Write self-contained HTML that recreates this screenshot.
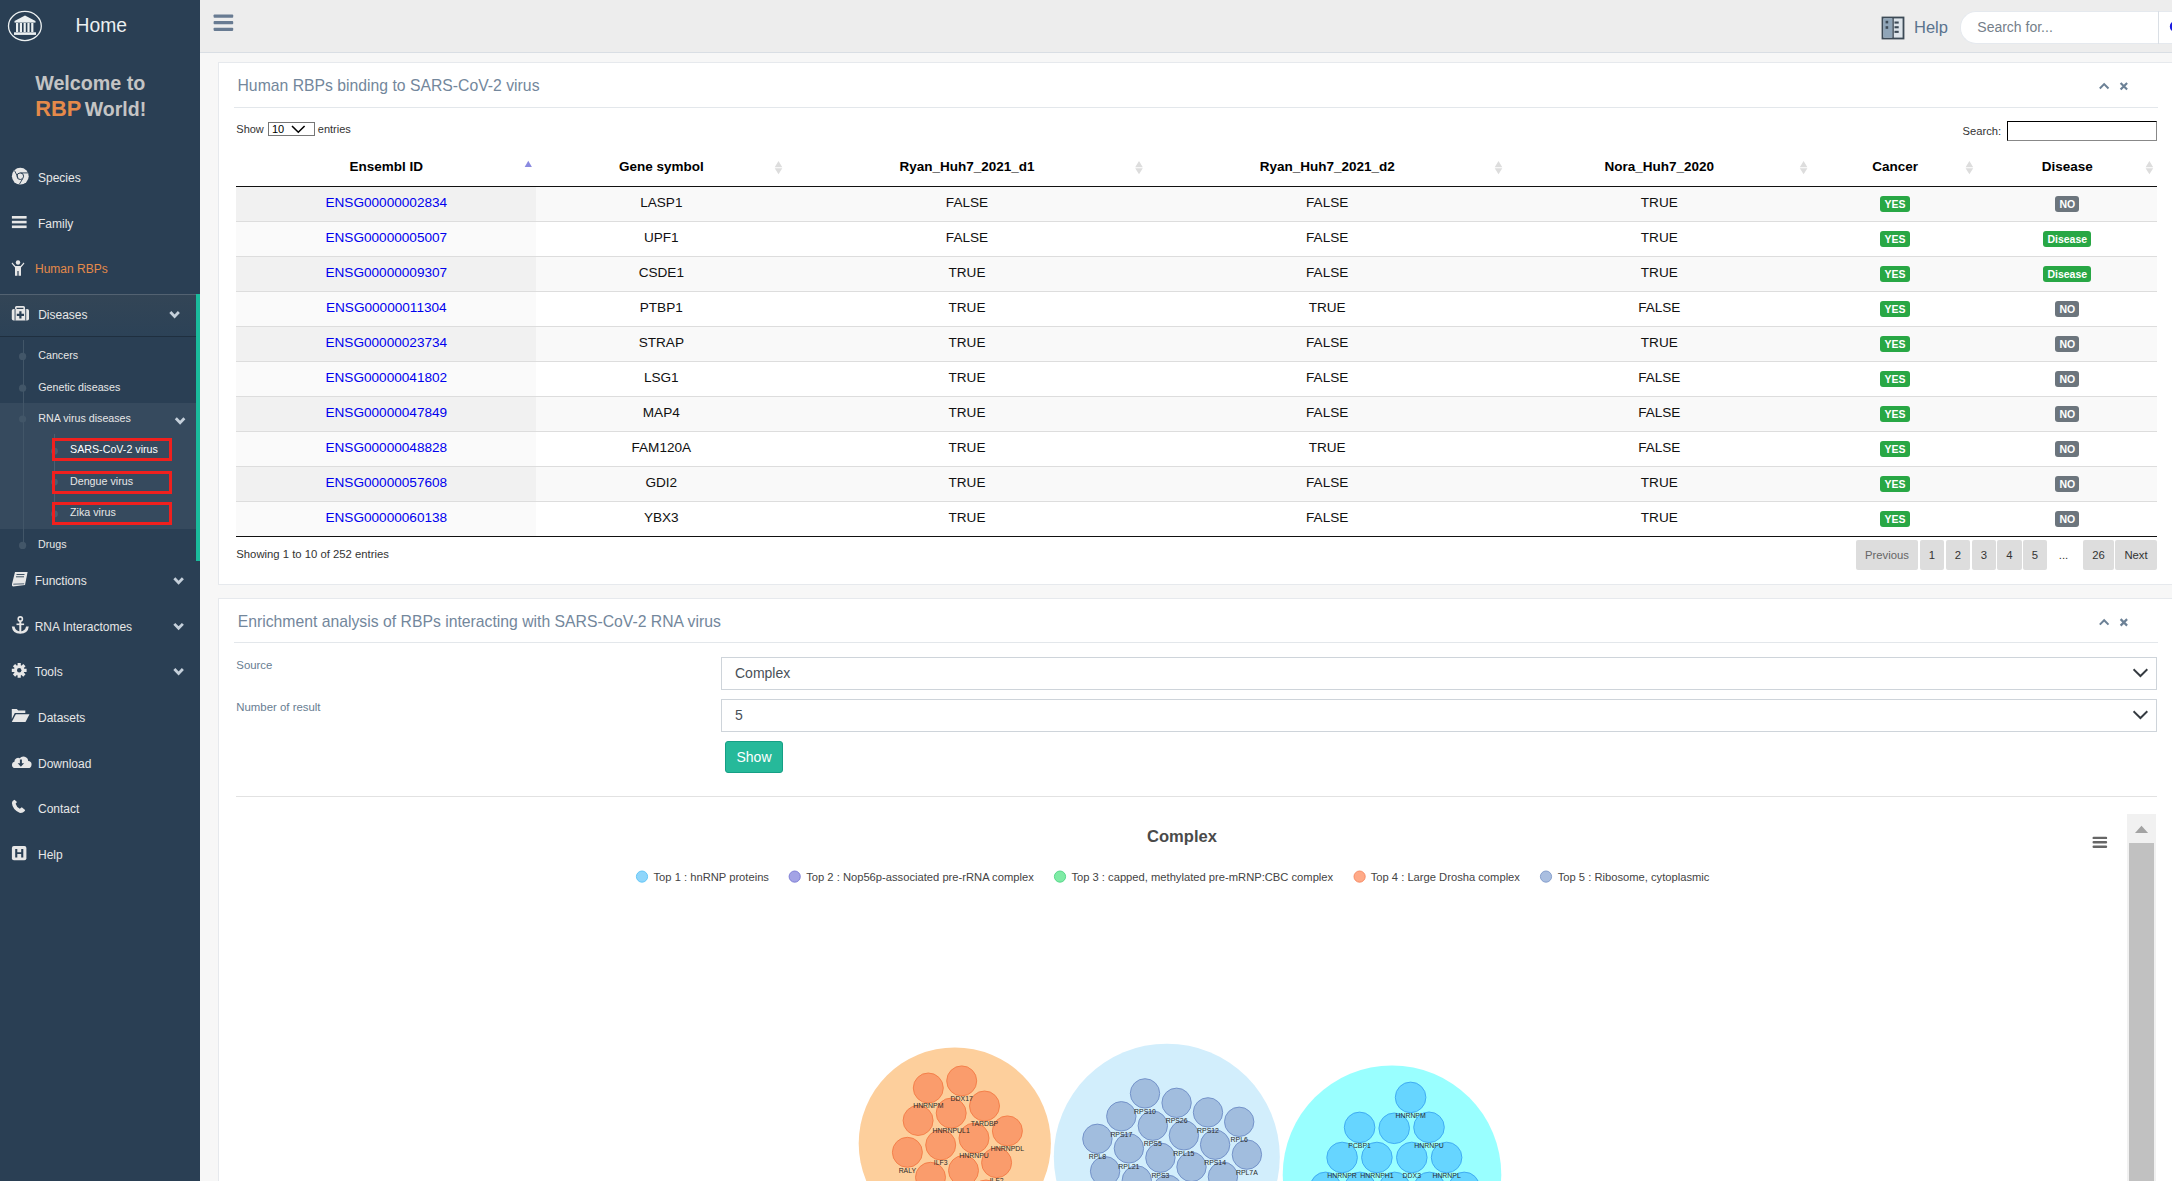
<!DOCTYPE html><html><head><meta charset="utf-8"><style>
*{margin:0;padding:0;box-sizing:border-box}
html,body{width:2172px;height:1181px;overflow:hidden;background:#F7F7F7;font-family:"Liberation Sans",sans-serif}
.t{position:absolute;line-height:1;white-space:nowrap}
.r{position:absolute}
svg{position:absolute;overflow:visible}
</style></head><body><div class="r" style="left:200px;top:0px;width:1972px;height:52px;background:#EDEDED"></div>
<div class="r" style="left:200px;top:52px;width:1972px;height:1px;background:#D9DEE4"></div>
<div class="r" style="left:218px;top:62px;width:1990px;height:523px;background:#fff;border:1px solid #E6E9ED"></div>
<div class="r" style="left:218px;top:598px;width:1990px;height:600px;background:#fff;border:1px solid #E6E9ED"></div>
<div class="r" style="left:0px;top:0px;width:200px;height:1181px;background:#2A3F54"></div>
<svg style="left:0;top:0" width="60" height="60"><ellipse cx="24.9" cy="26" rx="16.4" ry="14.6" fill="none" stroke="#ECF0F1" stroke-width="1.3"/><g fill="#ECF0F1"><path d="M14.5 21 L25 15.5 L35.5 21 Z"/><rect x="14.5" y="21" width="21" height="1.6"/><rect x="16" y="23" width="2.2" height="9"/><rect x="19.8" y="23" width="2.2" height="9"/><rect x="23.6" y="23" width="2.2" height="9"/><rect x="27.4" y="23" width="2.2" height="9"/><rect x="31.2" y="23" width="2.2" height="9"/><rect x="14" y="32.3" width="22" height="2.6"/></g></svg>
<div class="t " style="left:75.50px;top:15.86px;font-size:19.3px;color:#ECF0F1">Home</div>
<div class="t " style="left:35.20px;top:74.32px;font-size:19.7px;color:#C4C4C4;font-weight:bold">Welcome to</div>
<div class="t " style="left:35.20px;top:98.24px;font-size:21.8px;color:#E58A4A;font-weight:bold">RBP</div>
<div class="t " style="left:84.80px;top:100.19px;font-size:19.5px;color:#C4C4C4;font-weight:bold">World!</div>
<div class="r" style="left:0px;top:294px;width:196px;height:42px;background:linear-gradient(#334556,#2C4257);box-shadow:rgba(0,0,0,.25) 0 1px 0, inset rgba(255,255,255,.16) 0 1px 0"></div>
<div class="r" style="left:196px;top:294px;width:4px;height:267px;background:#1ABB9C"></div>
<div class="r" style="left:0px;top:403px;width:196px;height:126px;background:rgba(255,255,255,.06)"></div>
<div class="r" style="left:23px;top:340px;width:1px;height:206px;background:#425668"></div>
<svg style="left:0;top:0" width="40" height="600"><circle cx="22.6" cy="356.4" r="3.6" fill="#425668"/></svg>
<svg style="left:0;top:0" width="40" height="600"><circle cx="22.6" cy="388.2" r="3.6" fill="#425668"/></svg>
<svg style="left:0;top:0" width="40" height="600"><circle cx="22.6" cy="419" r="3.6" fill="#425668"/></svg>
<svg style="left:0;top:0" width="40" height="600"><circle cx="22.6" cy="545.4" r="3.6" fill="#425668"/></svg>
<div class="r" style="left:54px;top:434px;width:1px;height:91px;background:#4A5E70"></div>
<div class="t " style="left:38.00px;top:172.04px;font-size:12px;color:#E7E7E7">Species</div>
<div class="t " style="left:38.00px;top:217.74px;font-size:12px;color:#E7E7E7">Family</div>
<div class="t " style="left:35.00px;top:262.94px;font-size:12px;color:#E58A4A">Human RBPs</div>
<div class="t " style="left:38.15px;top:308.84px;font-size:12px;color:#E7E7E7">Diseases</div>
<div class="t " style="left:34.70px;top:575.04px;font-size:12px;color:#E7E7E7">Functions</div>
<div class="t " style="left:34.70px;top:620.84px;font-size:12px;color:#E7E7E7">RNA Interactomes</div>
<div class="t " style="left:34.70px;top:665.74px;font-size:12px;color:#E7E7E7">Tools</div>
<div class="t " style="left:38.00px;top:711.94px;font-size:12px;color:#E7E7E7">Datasets</div>
<div class="t " style="left:38.00px;top:757.64px;font-size:12px;color:#E7E7E7">Download</div>
<div class="t " style="left:38.00px;top:802.64px;font-size:12px;color:#E7E7E7">Contact</div>
<div class="t " style="left:38.00px;top:849.04px;font-size:12px;color:#E7E7E7">Help</div>
<div class="t " style="left:38.25px;top:349.94px;font-size:10.7px;color:#E7E7E7">Cancers</div>
<div class="t " style="left:38.25px;top:381.64px;font-size:10.7px;color:#E7E7E7">Genetic diseases</div>
<div class="t " style="left:38.25px;top:413.14px;font-size:10.7px;color:#E7E7E7">RNA virus diseases</div>
<div class="t " style="left:38.10px;top:539.14px;font-size:10.7px;color:#E7E7E7">Drugs</div>
<div class="t " style="left:70.00px;top:444.24px;font-size:10.7px;color:#FFFFFF">SARS-CoV-2 virus</div>
<div class="t " style="left:70.00px;top:476.14px;font-size:10.7px;color:#E7E7E7">Dengue virus</div>
<div class="t " style="left:70.00px;top:506.84px;font-size:10.7px;color:#E7E7E7">Zika virus</div>
<svg style="left:0;top:0" width="80" height="600"><circle cx="54.5" cy="451.2" r="3.4" fill="#4A5E70"/></svg>
<svg style="left:0;top:0" width="80" height="600"><circle cx="54.5" cy="482.1" r="3.4" fill="#4A5E70"/></svg>
<svg style="left:0;top:0" width="80" height="600"><circle cx="54.5" cy="513.9" r="3.4" fill="#4A5E70"/></svg>
<div class="r" style="left:52px;top:438px;width:120px;height:23px;border:3px solid #F0201E"></div>
<div class="r" style="left:52px;top:471px;width:120px;height:23px;border:3px solid #F0201E"></div>
<div class="r" style="left:52px;top:502px;width:120px;height:23px;border:3px solid #F0201E"></div>
<svg style="left:0;top:0" width="200" height="1181"><path d="M171.3 313.0 L174.6 316.4 L177.9 313.0" fill="none" stroke="#C5D0DB" stroke-width="2.8" stroke-linecap="square"/></svg>
<svg style="left:0;top:0" width="200" height="1181"><path d="M176.8 419.3 L180.1 422.7 L183.4 419.3" fill="none" stroke="#C5D0DB" stroke-width="2.8" stroke-linecap="square"/></svg>
<svg style="left:0;top:0" width="200" height="1181"><path d="M175.3 579.3 L178.6 582.7 L181.9 579.3" fill="none" stroke="#C5D0DB" stroke-width="2.8" stroke-linecap="square"/></svg>
<svg style="left:0;top:0" width="200" height="1181"><path d="M175.3 624.9 L178.6 628.3000000000001 L181.9 624.9" fill="none" stroke="#C5D0DB" stroke-width="2.8" stroke-linecap="square"/></svg>
<svg style="left:0;top:0" width="200" height="1181"><path d="M175.3 670.0 L178.6 673.4000000000001 L181.9 670.0" fill="none" stroke="#C5D0DB" stroke-width="2.8" stroke-linecap="square"/></svg>
<svg style="left:0;top:0" width="200" height="1181"><g fill="#E7E7E7"><circle cx="20.3" cy="176.2" r="8.4" fill="#E7E7E7"/><circle cx="20.3" cy="176.2" r="3.3" fill="none" stroke="#2A3F54" stroke-width="1"/><path d="M14.5 170.5 L18 177.5 M20.5 172.9 L28 172.9 M22.5 179 L19.5 184" stroke="#2A3F54" stroke-width="0.9" fill="none"/><rect x="11.9" y="216" width="14.7" height="2.6"/><rect x="11.9" y="220.8" width="14.7" height="2.6"/><rect x="11.9" y="225.5" width="14.7" height="2.6"/><circle cx="18" cy="262.5" r="2.2"/><path d="M12.2 262.5 L15.5 266 L20.5 266 L23.7 262.5 L24.4 263.5 L21 267.5 L21 275.7 L18.6 275.7 L18.6 271 L17.4 271 L17.4 275.7 L15 275.7 L15 267.5 L11.6 263.5 Z"/><path d="M16.5 306 h7 a1.5 1.5 0 0 1 1.5 1.5 v1.4 h-1.6 v-1.2 h-6.8 v1.2 h-1.6 v-1.4 a1.5 1.5 0 0 1 1.5 -1.5z"/><rect x="11.8" y="308.9" width="17.2" height="11.7" rx="1.8"/><rect x="14.6" y="308.9" width="0.9" height="11.7" fill="#2A3F54"/><rect x="25.3" y="308.9" width="0.9" height="11.7" fill="#2A3F54"/><path d="M19.3 311.3 h2.2 v2.5 h2.5 v2.2 h-2.5 v2.5 h-2.2 v-2.5 h-2.5 v-2.2 h2.5z" fill="#2A3F54"/><path d="M15 572 L27.6 572 L25 585 L13 586.6 Q11.5 586 12 584 Z"/><path d="M16.5 574.5 L24.5 574.5 M16 576.8 L24 576.8" stroke="#2A3F54" stroke-width="0.9"/><path d="M13.3 584.2 L24.2 583.8" stroke="#2A3F54" stroke-width="0.8"/><circle cx="20.3" cy="619" r="2.1" fill="none" stroke="#E7E7E7" stroke-width="1.6"/><rect x="19.3" y="621" width="2" height="11.5"/><rect x="16.5" y="623.5" width="7.6" height="1.6"/><path d="M11.8 626.5 L14.5 626.5 Q15.5 631 20.3 631.5 Q25.1 631 26.1 626.5 L28.8 626.5 Q28 633.7 20.3 633.7 Q12.6 633.7 11.8 626.5 Z"/><circle cx="19.2" cy="670.3" r="5.2"/><g stroke="#E7E7E7" stroke-width="3.2"><path d="M19.2 662.9 V677.7 M11.8 670.3 H26.6 M14 665.1 L24.4 675.5 M24.4 665.1 L14 675.5"/></g><circle cx="19.2" cy="670.3" r="2.2" fill="#2A3F54"/><path d="M11.8 709 h5 l1.5 1.6 h7 v2.4 h-10.5 l-3 6 Z"/><path d="M15.8 714.2 h13.7 l-4 7.8 h-13.7 Z"/><path d="M15 768.1 a3.2 3.2 0 0 1 -0.6 -6.3 a3.8 3.8 0 0 1 5.3 -3.6 a4.8 4.8 0 0 1 8.5 2.7 a3.6 3.6 0 0 1 -0.5 7.2 Z"/><path d="M19.9 759.5 h2 v3.8 h2.2 l-3.2 3.4 l-3.2 -3.4 h2.2 Z" fill="#2A3F54"/><path d="M14.5 799.8 Q12 800.5 11.9 803 Q12.5 809.5 19.5 812.8 Q22.5 813.5 24.8 811 L25.1 810 L21.8 807.3 L19.8 808.8 Q16.5 807 15.6 803.8 L17 802 Z"/><rect x="11.9" y="846" width="14.5" height="14.3" rx="2"/><path d="M15.2 849 v8.5 h2.1 v-3.4 h3.9 v3.4 h2.1 v-8.5 h-2.1 v3.3 h-3.9 v-3.3 Z" fill="#2A3F54"/></g></svg>
<svg style="left:0;top:0" width="2172" height="60"><g fill="#687B92"><rect x="213.6" y="14.5" width="19.6" height="3.2" rx="0.8"/><rect x="213.6" y="21.1" width="19.6" height="3.2" rx="0.8"/><rect x="213.6" y="27.7" width="19.6" height="3.2" rx="0.8"/></g><rect x="1882.5" y="17.5" width="21" height="21" fill="#DDE4EA" stroke="#3C4A56" stroke-width="1.8"/><rect x="1883.4" y="18.4" width="9" height="19.2" fill="#8FA5B8"/><rect x="1892.4" y="18" width="1.4" height="20" fill="#3C4A56"/><g fill="#3C4A56"><rect x="1885.6" y="20.8" width="2.6" height="2.6"/><rect x="1885.6" y="26.2" width="2.6" height="2.6"/><rect x="1894.5" y="21.5" width="4.2" height="2.1"/><rect x="1894.5" y="26.2" width="4.2" height="2.1"/><rect x="1894.5" y="30.8" width="4.2" height="2.1"/></g></svg>
<div class="t " style="left:1914.00px;top:18.93px;font-size:16.5px;color:#5A738E">Help</div>
<div class="r" style="left:1960px;top:10.5px;width:210px;height:33px;background:#fff;border:1px solid #E5E9EE;border-right:none;border-radius:16px 0 0 16px"></div>
<div class="r" style="left:2158px;top:10.5px;width:1px;height:33px;background:#DADFE5"></div>
<div class="r" style="left:2159px;top:10.5px;width:13px;height:33px;background:#fff;border-top:1px solid #E5E9EE;border-bottom:1px solid #E5E9EE"></div>
<svg style="left:0;top:0" width="2172" height="60"><circle cx="2175.5" cy="26.5" r="4.6" fill="none" stroke="#1B1BE0" stroke-width="2.2"/></svg>
<div class="t " style="left:1977.30px;top:20.05px;font-size:14px;color:#75808A">Search for...</div>
<div class="t " style="left:237.50px;top:78.06px;font-size:15.76px;color:#73879C">Human RBPs binding to SARS-CoV-2 virus</div>
<div class="r" style="left:234px;top:107px;width:1924px;height:1px;background:#E3E7EB"></div>
<svg style="left:0;top:0" width="2172" height="1181"><path d="M2099.8 88.5 L2104.15 84.1 L2108.5 88.5" fill="none" stroke="#6C8196" stroke-width="2"/><path d="M2120.6 83.0 L2127.1 89.5 M2127.1 83.0 L2120.6 89.5" stroke="#6C8196" stroke-width="2.2"/></svg>
<svg style="left:0;top:0" width="2172" height="1181"><path d="M2099.8 624.6 L2104.15 620.2 L2108.5 624.6" fill="none" stroke="#6C8196" stroke-width="2"/><path d="M2120.6 619.1 L2127.1 625.6 M2127.1 619.1 L2120.6 625.6" stroke="#6C8196" stroke-width="2.2"/></svg>
<div class="t " style="left:236.30px;top:123.59px;font-size:11px;color:#333">Show</div>
<div class="r" style="left:268px;top:122px;width:47px;height:14px;border:1px solid #767676;background:#fff"></div>
<div class="t " style="left:272.00px;top:123.59px;font-size:11px;color:#000">10</div>
<svg style="left:0;top:0" width="400" height="200"><path d="M292 126 L298.3 132.2 L304.6 126" fill="none" stroke="#000" stroke-width="1.6"/></svg>
<div class="t " style="left:317.80px;top:123.59px;font-size:11px;color:#333">entries</div>
<div class="t " style="left:1962.50px;top:125.92px;font-size:11.2px;color:#333">Search:</div>
<div class="r" style="left:2007px;top:121px;width:150px;height:20px;border:2px inset #767676;border-color:#111 #888 #888 #111;border-width:1.5px;background:#fff"></div>
<div class="t " style="left:186.30px;top:159.97px;width:400px;text-align:center;font-size:13.5px;color:#000;font-weight:bold">Ensembl ID</div>
<div class="t " style="left:461.30px;top:159.97px;width:400px;text-align:center;font-size:13.5px;color:#000;font-weight:bold">Gene symbol</div>
<div class="t " style="left:767.00px;top:159.97px;width:400px;text-align:center;font-size:13.5px;color:#000;font-weight:bold">Ryan_Huh7_2021_d1</div>
<div class="t " style="left:1127.20px;top:159.97px;width:400px;text-align:center;font-size:13.5px;color:#000;font-weight:bold">Ryan_Huh7_2021_d2</div>
<div class="t " style="left:1459.30px;top:159.97px;width:400px;text-align:center;font-size:13.5px;color:#000;font-weight:bold">Nora_Huh7_2020</div>
<div class="t " style="left:1695.10px;top:159.97px;width:400px;text-align:center;font-size:13.5px;color:#000;font-weight:bold">Cancer</div>
<div class="t " style="left:1867.30px;top:159.97px;width:400px;text-align:center;font-size:13.5px;color:#000;font-weight:bold">Disease</div>
<svg style="left:0;top:0" width="2172" height="300"><path d="M524.6999999999999 167 L528.3 160.8 L531.9 167 Z" fill="#8A8AE0"/><path d="M774.7 167.3 L778.5 161.1 L782.3 167.3 Z M774.7 168.2 L778.5 174.3 L782.3 168.2 Z" fill="#DDDDDD"/><path d="M1135.2 167.3 L1139 161.1 L1142.8 167.3 Z M1135.2 168.2 L1139 174.3 L1142.8 168.2 Z" fill="#DDDDDD"/><path d="M1494.7 167.3 L1498.5 161.1 L1502.3 167.3 Z M1494.7 168.2 L1498.5 174.3 L1502.3 168.2 Z" fill="#DDDDDD"/><path d="M1799.8 167.3 L1803.6 161.1 L1807.3999999999999 167.3 Z M1799.8 168.2 L1803.6 174.3 L1807.3999999999999 168.2 Z" fill="#DDDDDD"/><path d="M1965.6000000000001 167.3 L1969.4 161.1 L1973.2 167.3 Z M1965.6000000000001 168.2 L1969.4 174.3 L1973.2 168.2 Z" fill="#DDDDDD"/><path d="M2145.6 167.3 L2149.4 161.1 L2153.2000000000003 167.3 Z M2145.6 168.2 L2149.4 174.3 L2153.2000000000003 168.2 Z" fill="#DDDDDD"/></svg>
<div class="r" style="left:236px;top:186px;width:1921px;height:1px;background:#111"></div>
<div class="r" style="left:236px;top:187px;width:1921px;height:34px;background:#F9F9F9"></div>
<div class="r" style="left:236px;top:187px;width:300px;height:34px;background:#F1F1F1"></div>
<div class="t " style="left:236.30px;top:196.28px;width:300px;text-align:center;font-size:13.6px;color:#0000EE">ENSG00000002834</div>
<div class="t " style="left:511.30px;top:196.28px;width:300px;text-align:center;font-size:13.6px;color:#111">LASP1</div>
<div class="t " style="left:817.00px;top:196.28px;width:300px;text-align:center;font-size:13.6px;color:#111">FALSE</div>
<div class="t " style="left:1177.20px;top:196.28px;width:300px;text-align:center;font-size:13.6px;color:#111">FALSE</div>
<div class="t " style="left:1509.30px;top:196.28px;width:300px;text-align:center;font-size:13.6px;color:#111">TRUE</div>
<div class="r" style="left:1835.1px;top:196px;width:120px;height:16px;text-align:center"><span style="display:inline-block;background:#28A745;color:#fff;font-weight:bold;font-size:10.5px;line-height:10.5px;padding:2.7px 4.2px;border-radius:3px;vertical-align:top">YES</span></div>
<div class="r" style="left:2007.3000000000002px;top:196px;width:120px;height:16px;text-align:center"><span style="display:inline-block;background:#6C757D;color:#fff;font-weight:bold;font-size:10.5px;line-height:10.5px;padding:2.7px 4.2px;border-radius:3px;vertical-align:top">NO</span></div>
<div class="r" style="left:236px;top:221px;width:1921px;height:1px;background:#DDDDDD"></div>
<div class="r" style="left:236px;top:222px;width:1921px;height:34px;background:#FFFFFF"></div>
<div class="r" style="left:236px;top:222px;width:300px;height:34px;background:#FAFAFA"></div>
<div class="t " style="left:236.30px;top:231.28px;width:300px;text-align:center;font-size:13.6px;color:#0000EE">ENSG00000005007</div>
<div class="t " style="left:511.30px;top:231.28px;width:300px;text-align:center;font-size:13.6px;color:#111">UPF1</div>
<div class="t " style="left:817.00px;top:231.28px;width:300px;text-align:center;font-size:13.6px;color:#111">FALSE</div>
<div class="t " style="left:1177.20px;top:231.28px;width:300px;text-align:center;font-size:13.6px;color:#111">FALSE</div>
<div class="t " style="left:1509.30px;top:231.28px;width:300px;text-align:center;font-size:13.6px;color:#111">TRUE</div>
<div class="r" style="left:1835.1px;top:231px;width:120px;height:16px;text-align:center"><span style="display:inline-block;background:#28A745;color:#fff;font-weight:bold;font-size:10.5px;line-height:10.5px;padding:2.7px 4.2px;border-radius:3px;vertical-align:top">YES</span></div>
<div class="r" style="left:2007.3000000000002px;top:231px;width:120px;height:16px;text-align:center"><span style="display:inline-block;background:#28A745;color:#fff;font-weight:bold;font-size:10.5px;line-height:10.5px;padding:2.7px 4.2px;border-radius:3px;vertical-align:top">Disease</span></div>
<div class="r" style="left:236px;top:256px;width:1921px;height:1px;background:#DDDDDD"></div>
<div class="r" style="left:236px;top:257px;width:1921px;height:34px;background:#F9F9F9"></div>
<div class="r" style="left:236px;top:257px;width:300px;height:34px;background:#F1F1F1"></div>
<div class="t " style="left:236.30px;top:266.28px;width:300px;text-align:center;font-size:13.6px;color:#0000EE">ENSG00000009307</div>
<div class="t " style="left:511.30px;top:266.28px;width:300px;text-align:center;font-size:13.6px;color:#111">CSDE1</div>
<div class="t " style="left:817.00px;top:266.28px;width:300px;text-align:center;font-size:13.6px;color:#111">TRUE</div>
<div class="t " style="left:1177.20px;top:266.28px;width:300px;text-align:center;font-size:13.6px;color:#111">FALSE</div>
<div class="t " style="left:1509.30px;top:266.28px;width:300px;text-align:center;font-size:13.6px;color:#111">TRUE</div>
<div class="r" style="left:1835.1px;top:266px;width:120px;height:16px;text-align:center"><span style="display:inline-block;background:#28A745;color:#fff;font-weight:bold;font-size:10.5px;line-height:10.5px;padding:2.7px 4.2px;border-radius:3px;vertical-align:top">YES</span></div>
<div class="r" style="left:2007.3000000000002px;top:266px;width:120px;height:16px;text-align:center"><span style="display:inline-block;background:#28A745;color:#fff;font-weight:bold;font-size:10.5px;line-height:10.5px;padding:2.7px 4.2px;border-radius:3px;vertical-align:top">Disease</span></div>
<div class="r" style="left:236px;top:291px;width:1921px;height:1px;background:#DDDDDD"></div>
<div class="r" style="left:236px;top:292px;width:1921px;height:34px;background:#FFFFFF"></div>
<div class="r" style="left:236px;top:292px;width:300px;height:34px;background:#FAFAFA"></div>
<div class="t " style="left:236.30px;top:301.28px;width:300px;text-align:center;font-size:13.6px;color:#0000EE">ENSG00000011304</div>
<div class="t " style="left:511.30px;top:301.28px;width:300px;text-align:center;font-size:13.6px;color:#111">PTBP1</div>
<div class="t " style="left:817.00px;top:301.28px;width:300px;text-align:center;font-size:13.6px;color:#111">TRUE</div>
<div class="t " style="left:1177.20px;top:301.28px;width:300px;text-align:center;font-size:13.6px;color:#111">TRUE</div>
<div class="t " style="left:1509.30px;top:301.28px;width:300px;text-align:center;font-size:13.6px;color:#111">FALSE</div>
<div class="r" style="left:1835.1px;top:301px;width:120px;height:16px;text-align:center"><span style="display:inline-block;background:#28A745;color:#fff;font-weight:bold;font-size:10.5px;line-height:10.5px;padding:2.7px 4.2px;border-radius:3px;vertical-align:top">YES</span></div>
<div class="r" style="left:2007.3000000000002px;top:301px;width:120px;height:16px;text-align:center"><span style="display:inline-block;background:#6C757D;color:#fff;font-weight:bold;font-size:10.5px;line-height:10.5px;padding:2.7px 4.2px;border-radius:3px;vertical-align:top">NO</span></div>
<div class="r" style="left:236px;top:326px;width:1921px;height:1px;background:#DDDDDD"></div>
<div class="r" style="left:236px;top:327px;width:1921px;height:34px;background:#F9F9F9"></div>
<div class="r" style="left:236px;top:327px;width:300px;height:34px;background:#F1F1F1"></div>
<div class="t " style="left:236.30px;top:336.28px;width:300px;text-align:center;font-size:13.6px;color:#0000EE">ENSG00000023734</div>
<div class="t " style="left:511.30px;top:336.28px;width:300px;text-align:center;font-size:13.6px;color:#111">STRAP</div>
<div class="t " style="left:817.00px;top:336.28px;width:300px;text-align:center;font-size:13.6px;color:#111">TRUE</div>
<div class="t " style="left:1177.20px;top:336.28px;width:300px;text-align:center;font-size:13.6px;color:#111">FALSE</div>
<div class="t " style="left:1509.30px;top:336.28px;width:300px;text-align:center;font-size:13.6px;color:#111">TRUE</div>
<div class="r" style="left:1835.1px;top:336px;width:120px;height:16px;text-align:center"><span style="display:inline-block;background:#28A745;color:#fff;font-weight:bold;font-size:10.5px;line-height:10.5px;padding:2.7px 4.2px;border-radius:3px;vertical-align:top">YES</span></div>
<div class="r" style="left:2007.3000000000002px;top:336px;width:120px;height:16px;text-align:center"><span style="display:inline-block;background:#6C757D;color:#fff;font-weight:bold;font-size:10.5px;line-height:10.5px;padding:2.7px 4.2px;border-radius:3px;vertical-align:top">NO</span></div>
<div class="r" style="left:236px;top:361px;width:1921px;height:1px;background:#DDDDDD"></div>
<div class="r" style="left:236px;top:362px;width:1921px;height:34px;background:#FFFFFF"></div>
<div class="r" style="left:236px;top:362px;width:300px;height:34px;background:#FAFAFA"></div>
<div class="t " style="left:236.30px;top:371.28px;width:300px;text-align:center;font-size:13.6px;color:#0000EE">ENSG00000041802</div>
<div class="t " style="left:511.30px;top:371.28px;width:300px;text-align:center;font-size:13.6px;color:#111">LSG1</div>
<div class="t " style="left:817.00px;top:371.28px;width:300px;text-align:center;font-size:13.6px;color:#111">TRUE</div>
<div class="t " style="left:1177.20px;top:371.28px;width:300px;text-align:center;font-size:13.6px;color:#111">FALSE</div>
<div class="t " style="left:1509.30px;top:371.28px;width:300px;text-align:center;font-size:13.6px;color:#111">FALSE</div>
<div class="r" style="left:1835.1px;top:371px;width:120px;height:16px;text-align:center"><span style="display:inline-block;background:#28A745;color:#fff;font-weight:bold;font-size:10.5px;line-height:10.5px;padding:2.7px 4.2px;border-radius:3px;vertical-align:top">YES</span></div>
<div class="r" style="left:2007.3000000000002px;top:371px;width:120px;height:16px;text-align:center"><span style="display:inline-block;background:#6C757D;color:#fff;font-weight:bold;font-size:10.5px;line-height:10.5px;padding:2.7px 4.2px;border-radius:3px;vertical-align:top">NO</span></div>
<div class="r" style="left:236px;top:396px;width:1921px;height:1px;background:#DDDDDD"></div>
<div class="r" style="left:236px;top:397px;width:1921px;height:34px;background:#F9F9F9"></div>
<div class="r" style="left:236px;top:397px;width:300px;height:34px;background:#F1F1F1"></div>
<div class="t " style="left:236.30px;top:406.28px;width:300px;text-align:center;font-size:13.6px;color:#0000EE">ENSG00000047849</div>
<div class="t " style="left:511.30px;top:406.28px;width:300px;text-align:center;font-size:13.6px;color:#111">MAP4</div>
<div class="t " style="left:817.00px;top:406.28px;width:300px;text-align:center;font-size:13.6px;color:#111">TRUE</div>
<div class="t " style="left:1177.20px;top:406.28px;width:300px;text-align:center;font-size:13.6px;color:#111">FALSE</div>
<div class="t " style="left:1509.30px;top:406.28px;width:300px;text-align:center;font-size:13.6px;color:#111">FALSE</div>
<div class="r" style="left:1835.1px;top:406px;width:120px;height:16px;text-align:center"><span style="display:inline-block;background:#28A745;color:#fff;font-weight:bold;font-size:10.5px;line-height:10.5px;padding:2.7px 4.2px;border-radius:3px;vertical-align:top">YES</span></div>
<div class="r" style="left:2007.3000000000002px;top:406px;width:120px;height:16px;text-align:center"><span style="display:inline-block;background:#6C757D;color:#fff;font-weight:bold;font-size:10.5px;line-height:10.5px;padding:2.7px 4.2px;border-radius:3px;vertical-align:top">NO</span></div>
<div class="r" style="left:236px;top:431px;width:1921px;height:1px;background:#DDDDDD"></div>
<div class="r" style="left:236px;top:432px;width:1921px;height:34px;background:#FFFFFF"></div>
<div class="r" style="left:236px;top:432px;width:300px;height:34px;background:#FAFAFA"></div>
<div class="t " style="left:236.30px;top:441.28px;width:300px;text-align:center;font-size:13.6px;color:#0000EE">ENSG00000048828</div>
<div class="t " style="left:511.30px;top:441.28px;width:300px;text-align:center;font-size:13.6px;color:#111">FAM120A</div>
<div class="t " style="left:817.00px;top:441.28px;width:300px;text-align:center;font-size:13.6px;color:#111">TRUE</div>
<div class="t " style="left:1177.20px;top:441.28px;width:300px;text-align:center;font-size:13.6px;color:#111">TRUE</div>
<div class="t " style="left:1509.30px;top:441.28px;width:300px;text-align:center;font-size:13.6px;color:#111">FALSE</div>
<div class="r" style="left:1835.1px;top:441px;width:120px;height:16px;text-align:center"><span style="display:inline-block;background:#28A745;color:#fff;font-weight:bold;font-size:10.5px;line-height:10.5px;padding:2.7px 4.2px;border-radius:3px;vertical-align:top">YES</span></div>
<div class="r" style="left:2007.3000000000002px;top:441px;width:120px;height:16px;text-align:center"><span style="display:inline-block;background:#6C757D;color:#fff;font-weight:bold;font-size:10.5px;line-height:10.5px;padding:2.7px 4.2px;border-radius:3px;vertical-align:top">NO</span></div>
<div class="r" style="left:236px;top:466px;width:1921px;height:1px;background:#DDDDDD"></div>
<div class="r" style="left:236px;top:467px;width:1921px;height:34px;background:#F9F9F9"></div>
<div class="r" style="left:236px;top:467px;width:300px;height:34px;background:#F1F1F1"></div>
<div class="t " style="left:236.30px;top:476.28px;width:300px;text-align:center;font-size:13.6px;color:#0000EE">ENSG00000057608</div>
<div class="t " style="left:511.30px;top:476.28px;width:300px;text-align:center;font-size:13.6px;color:#111">GDI2</div>
<div class="t " style="left:817.00px;top:476.28px;width:300px;text-align:center;font-size:13.6px;color:#111">TRUE</div>
<div class="t " style="left:1177.20px;top:476.28px;width:300px;text-align:center;font-size:13.6px;color:#111">FALSE</div>
<div class="t " style="left:1509.30px;top:476.28px;width:300px;text-align:center;font-size:13.6px;color:#111">TRUE</div>
<div class="r" style="left:1835.1px;top:476px;width:120px;height:16px;text-align:center"><span style="display:inline-block;background:#28A745;color:#fff;font-weight:bold;font-size:10.5px;line-height:10.5px;padding:2.7px 4.2px;border-radius:3px;vertical-align:top">YES</span></div>
<div class="r" style="left:2007.3000000000002px;top:476px;width:120px;height:16px;text-align:center"><span style="display:inline-block;background:#6C757D;color:#fff;font-weight:bold;font-size:10.5px;line-height:10.5px;padding:2.7px 4.2px;border-radius:3px;vertical-align:top">NO</span></div>
<div class="r" style="left:236px;top:501px;width:1921px;height:1px;background:#DDDDDD"></div>
<div class="r" style="left:236px;top:502px;width:1921px;height:34px;background:#FFFFFF"></div>
<div class="r" style="left:236px;top:502px;width:300px;height:34px;background:#FAFAFA"></div>
<div class="t " style="left:236.30px;top:511.28px;width:300px;text-align:center;font-size:13.6px;color:#0000EE">ENSG00000060138</div>
<div class="t " style="left:511.30px;top:511.28px;width:300px;text-align:center;font-size:13.6px;color:#111">YBX3</div>
<div class="t " style="left:817.00px;top:511.28px;width:300px;text-align:center;font-size:13.6px;color:#111">TRUE</div>
<div class="t " style="left:1177.20px;top:511.28px;width:300px;text-align:center;font-size:13.6px;color:#111">FALSE</div>
<div class="t " style="left:1509.30px;top:511.28px;width:300px;text-align:center;font-size:13.6px;color:#111">TRUE</div>
<div class="r" style="left:1835.1px;top:511px;width:120px;height:16px;text-align:center"><span style="display:inline-block;background:#28A745;color:#fff;font-weight:bold;font-size:10.5px;line-height:10.5px;padding:2.7px 4.2px;border-radius:3px;vertical-align:top">YES</span></div>
<div class="r" style="left:2007.3000000000002px;top:511px;width:120px;height:16px;text-align:center"><span style="display:inline-block;background:#6C757D;color:#fff;font-weight:bold;font-size:10.5px;line-height:10.5px;padding:2.7px 4.2px;border-radius:3px;vertical-align:top">NO</span></div>
<div class="r" style="left:236px;top:536px;width:1921px;height:1px;background:#111"></div>
<div class="t " style="left:236.30px;top:549.03px;font-size:11.3px;color:#333">Showing 1 to 10 of 252 entries</div>
<div class="r" style="left:1856px;top:540px;width:62px;height:30px;background:#DDDDDD;border-radius:2px"></div>
<div class="t " style="left:1837.00px;top:550.23px;width:100px;text-align:center;font-size:11.3px;color:#666">Previous</div>
<div class="r" style="left:1920px;top:540px;width:24px;height:30px;background:#DDDDDD;border-radius:2px"></div>
<div class="t " style="left:1882.00px;top:550.23px;width:100px;text-align:center;font-size:11.3px;color:#333">1</div>
<div class="r" style="left:1946px;top:540px;width:24px;height:30px;background:#DDDDDD;border-radius:2px"></div>
<div class="t " style="left:1908.00px;top:550.23px;width:100px;text-align:center;font-size:11.3px;color:#333">2</div>
<div class="r" style="left:1972px;top:540px;width:24px;height:30px;background:#DDDDDD;border-radius:2px"></div>
<div class="t " style="left:1934.00px;top:550.23px;width:100px;text-align:center;font-size:11.3px;color:#333">3</div>
<div class="r" style="left:1997px;top:540px;width:25px;height:30px;background:#DDDDDD;border-radius:2px"></div>
<div class="t " style="left:1959.50px;top:550.23px;width:100px;text-align:center;font-size:11.3px;color:#333">4</div>
<div class="r" style="left:2023px;top:540px;width:24px;height:30px;background:#DDDDDD;border-radius:2px"></div>
<div class="t " style="left:1985.00px;top:550.23px;width:100px;text-align:center;font-size:11.3px;color:#333">5</div>
<div class="r" style="left:2083px;top:540px;width:31px;height:30px;background:#DDDDDD;border-radius:2px"></div>
<div class="t " style="left:2048.50px;top:550.23px;width:100px;text-align:center;font-size:11.3px;color:#333">26</div>
<div class="r" style="left:2115px;top:540px;width:42px;height:30px;background:#DDDDDD;border-radius:2px"></div>
<div class="t " style="left:2086.00px;top:550.23px;width:100px;text-align:center;font-size:11.3px;color:#333">Next</div>
<div class="t " style="left:2013.50px;top:550.23px;width:100px;text-align:center;font-size:11.3px;color:#333">...</div>
<div class="t " style="left:237.70px;top:613.86px;font-size:15.76px;color:#73879C">Enrichment analysis of RBPs interacting with SARS-CoV-2 RNA virus</div>
<div class="r" style="left:234px;top:642px;width:1924px;height:1px;background:#E3E7EB"></div>
<div class="t " style="left:236.30px;top:659.65px;font-size:11.4px;color:#687D92">Source</div>
<div class="t " style="left:236.30px;top:701.75px;font-size:11.4px;color:#687D92">Number of result</div>
<div class="r" style="left:721px;top:657px;width:1436px;height:33px;border:1px solid #CED4DA;background:#fff"></div>
<div class="r" style="left:721px;top:699px;width:1436px;height:33px;border:1px solid #CED4DA;background:#fff"></div>
<div class="t " style="left:735.00px;top:665.95px;font-size:14px;color:#495057">Complex</div>
<div class="t " style="left:735.00px;top:707.85px;font-size:14px;color:#495057">5</div>
<svg style="left:0;top:0" width="2172" height="1181"><path d="M2134.25 669.95 L2140.4500000000003 676.05 L2146.6500000000005 669.95" fill="none" stroke="#343A40" stroke-width="1.9" stroke-linecap="square"/></svg>
<svg style="left:0;top:0" width="2172" height="1181"><path d="M2134.25 711.95 L2140.4500000000003 718.05 L2146.6500000000005 711.95" fill="none" stroke="#343A40" stroke-width="1.9" stroke-linecap="square"/></svg>
<div class="r" style="left:725px;top:741px;width:58px;height:32px;background:#26B99A;border:1px solid #169F85;border-radius:3px"></div>
<div class="t " style="left:704.00px;top:750.35px;width:100px;text-align:center;font-size:14px;color:#fff">Show</div>
<div class="r" style="left:236px;top:796px;width:1921px;height:1px;background:#E2E2E2"></div>
<div class="t " style="left:982.00px;top:829.48px;width:400px;text-align:center;font-size:16.56px;color:#4A4A4A;font-weight:bold">Complex</div>
<svg style="left:0;top:0" width="2172" height="1181"><circle cx="642" cy="876.6" r="5.6" fill="#8FD6FB" stroke="#5CC3F5" stroke-width="0.9"/><circle cx="794.7" cy="876.6" r="5.6" fill="#A3A3E5" stroke="#7777D3" stroke-width="0.9"/><circle cx="1060" cy="876.6" r="5.6" fill="#7FEBA5" stroke="#4DD583" stroke-width="0.9"/><circle cx="1359.6" cy="876.6" r="5.6" fill="#FFAA88" stroke="#F5835C" stroke-width="0.9"/><circle cx="1546" cy="876.6" r="5.6" fill="#A9BEE0" stroke="#7E98C8" stroke-width="0.9"/></svg>
<div class="t " style="left:653.50px;top:871.52px;font-size:11.2px;color:#444">Top 1 : hnRNP proteins</div>
<div class="t " style="left:806.20px;top:871.52px;font-size:11.2px;color:#444">Top 2 : Nop56p-associated pre-rRNA complex</div>
<div class="t " style="left:1071.40px;top:871.52px;font-size:11.2px;color:#444">Top 3 : capped, methylated pre-mRNP:CBC complex</div>
<div class="t " style="left:1370.70px;top:871.52px;font-size:11.2px;color:#444">Top 4 : Large Drosha complex</div>
<div class="t " style="left:1557.70px;top:871.52px;font-size:11.2px;color:#444">Top 5 : Ribosome, cytoplasmic</div>
<svg style="left:0;top:0" width="2172" height="1181"><g stroke="#666" stroke-width="2.4" stroke-linecap="round"><path d="M2093.7 837.9 H2106 M2093.7 842.3 H2106 M2093.7 846.7 H2106"/></g></svg>
<div class="r" style="left:2127px;top:814px;width:29px;height:400px;background:#F1F1F1"></div>
<div class="r" style="left:2129px;top:843px;width:25px;height:400px;background:#C1C1C1"></div>
<svg style="left:0;top:0" width="2172" height="1181"><path d="M2135 833 L2141.5 825.7 L2148.1 833 Z" fill="#A3A3A3"/></svg>
<svg style="left:0;top:0" width="2172" height="1181"><circle cx="954.8" cy="1143.5" r="96.1" fill="#FDCF9C"/><circle cx="928.3" cy="1088" r="15.0" fill="#FA9C6C" stroke="#F37A45" stroke-width="0.9"/><circle cx="961.7" cy="1080.9" r="15.0" fill="#FA9C6C" stroke="#F37A45" stroke-width="0.9"/><circle cx="984.5" cy="1106" r="15.0" fill="#FA9C6C" stroke="#F37A45" stroke-width="0.9"/><circle cx="951.2" cy="1113.1" r="15.0" fill="#FA9C6C" stroke="#F37A45" stroke-width="0.9"/><circle cx="918.1" cy="1120.5" r="15.0" fill="#FA9C6C" stroke="#F37A45" stroke-width="0.9"/><circle cx="1007.4" cy="1130.9" r="15.0" fill="#FA9C6C" stroke="#F37A45" stroke-width="0.9"/><circle cx="974" cy="1138.2" r="15.0" fill="#FA9C6C" stroke="#F37A45" stroke-width="0.9"/><circle cx="940.7" cy="1145" r="15.0" fill="#FA9C6C" stroke="#F37A45" stroke-width="0.9"/><circle cx="907.4" cy="1152.3" r="15.0" fill="#FA9C6C" stroke="#F37A45" stroke-width="0.9"/><circle cx="996.6" cy="1162.7" r="15.0" fill="#FA9C6C" stroke="#F37A45" stroke-width="0.9"/><circle cx="963.5" cy="1170.5" r="15.0" fill="#FA9C6C" stroke="#F37A45" stroke-width="0.9"/><circle cx="930.5" cy="1177.3" r="15.0" fill="#FA9C6C" stroke="#F37A45" stroke-width="0.9"/><circle cx="986" cy="1195" r="15.0" fill="#FA9C6C" stroke="#F37A45" stroke-width="0.9"/><circle cx="1166.8" cy="1156.7" r="113" fill="#D2EEFC"/><circle cx="1145" cy="1093.4" r="14.7" fill="#A1BDDE" stroke="#6D8CC6" stroke-width="0.9"/><circle cx="1176.6" cy="1102.8" r="14.7" fill="#A1BDDE" stroke="#6D8CC6" stroke-width="0.9"/><circle cx="1208" cy="1112.4" r="14.7" fill="#A1BDDE" stroke="#6D8CC6" stroke-width="0.9"/><circle cx="1239.2" cy="1121.8" r="14.7" fill="#A1BDDE" stroke="#6D8CC6" stroke-width="0.9"/><circle cx="1121.3" cy="1116.3" r="14.7" fill="#A1BDDE" stroke="#6D8CC6" stroke-width="0.9"/><circle cx="1152.8" cy="1125.7" r="14.7" fill="#A1BDDE" stroke="#6D8CC6" stroke-width="0.9"/><circle cx="1183.9" cy="1135.3" r="14.7" fill="#A1BDDE" stroke="#6D8CC6" stroke-width="0.9"/><circle cx="1215.1" cy="1144.7" r="14.7" fill="#A1BDDE" stroke="#6D8CC6" stroke-width="0.9"/><circle cx="1246.9" cy="1154.6" r="14.7" fill="#A1BDDE" stroke="#6D8CC6" stroke-width="0.9"/><circle cx="1097.4" cy="1138.8" r="14.7" fill="#A1BDDE" stroke="#6D8CC6" stroke-width="0.9"/><circle cx="1128.9" cy="1148.4" r="14.7" fill="#A1BDDE" stroke="#6D8CC6" stroke-width="0.9"/><circle cx="1160.4" cy="1157.7" r="14.7" fill="#A1BDDE" stroke="#6D8CC6" stroke-width="0.9"/><circle cx="1191.5" cy="1166.9" r="14.7" fill="#A1BDDE" stroke="#6D8CC6" stroke-width="0.9"/><circle cx="1222.9" cy="1176.8" r="14.7" fill="#A1BDDE" stroke="#6D8CC6" stroke-width="0.9"/><circle cx="1105.1" cy="1171.2" r="14.7" fill="#A1BDDE" stroke="#6D8CC6" stroke-width="0.9"/><circle cx="1136.8" cy="1180.5" r="14.7" fill="#A1BDDE" stroke="#6D8CC6" stroke-width="0.9"/><circle cx="1167.6" cy="1189.8" r="14.7" fill="#A1BDDE" stroke="#6D8CC6" stroke-width="0.9"/><circle cx="1392" cy="1174.8" r="109.3" fill="#99FFFF"/><circle cx="1410.6" cy="1097.4" r="15.3" fill="#66D5FF" stroke="#3AA6F2" stroke-width="0.9"/><circle cx="1359.6" cy="1127.4" r="15.3" fill="#66D5FF" stroke="#3AA6F2" stroke-width="0.9"/><circle cx="1394.2" cy="1128.3" r="15.3" fill="#66D5FF" stroke="#3AA6F2" stroke-width="0.9"/><circle cx="1429" cy="1127.3" r="15.3" fill="#66D5FF" stroke="#3AA6F2" stroke-width="0.9"/><circle cx="1342.1" cy="1157.5" r="15.3" fill="#66D5FF" stroke="#3AA6F2" stroke-width="0.9"/><circle cx="1376.9" cy="1157.5" r="15.3" fill="#66D5FF" stroke="#3AA6F2" stroke-width="0.9"/><circle cx="1411.8" cy="1157.5" r="15.3" fill="#66D5FF" stroke="#3AA6F2" stroke-width="0.9"/><circle cx="1446.6" cy="1157.5" r="15.3" fill="#66D5FF" stroke="#3AA6F2" stroke-width="0.9"/><circle cx="1325.5" cy="1187.4" r="15.3" fill="#66D5FF" stroke="#3AA6F2" stroke-width="0.9"/><circle cx="1360" cy="1187.4" r="15.3" fill="#66D5FF" stroke="#3AA6F2" stroke-width="0.9"/><circle cx="1394.6" cy="1187.4" r="15.3" fill="#66D5FF" stroke="#3AA6F2" stroke-width="0.9"/><circle cx="1429.4" cy="1187.4" r="15.3" fill="#66D5FF" stroke="#3AA6F2" stroke-width="0.9"/><circle cx="1464.2" cy="1187.4" r="15.3" fill="#66D5FF" stroke="#3AA6F2" stroke-width="0.9"/><g font-family="Liberation Sans" font-size="6.9" fill="#2A2A2A"><text x="928.3" y="1108.2" text-anchor="middle">HNRNPM</text><text x="961.7" y="1101.1000000000001" text-anchor="middle">DDX17</text><text x="984.5" y="1126.2" text-anchor="middle">TARDBP</text><text x="951.2" y="1133.3" text-anchor="middle">HNRNPUL1</text><text x="1007.4" y="1151.1000000000001" text-anchor="middle">HNRNPDL</text><text x="974" y="1158.4" text-anchor="middle">HNRNPU</text><text x="940.7" y="1165.2" text-anchor="middle">ILF3</text><text x="907.4" y="1172.5" text-anchor="middle">RALY</text><text x="996.6" y="1182.9" text-anchor="middle">ILF2</text><text x="1145" y="1113.6000000000001" text-anchor="middle">RPS10</text><text x="1176.6" y="1123.0" text-anchor="middle">RPS26</text><text x="1208" y="1132.6000000000001" text-anchor="middle">RPS12</text><text x="1239.2" y="1142.0" text-anchor="middle">RPL6</text><text x="1121.3" y="1136.5" text-anchor="middle">RPS17</text><text x="1152.8" y="1145.9" text-anchor="middle">RPS5</text><text x="1183.9" y="1155.5" text-anchor="middle">RPL15</text><text x="1215.1" y="1164.9" text-anchor="middle">RPS14</text><text x="1246.9" y="1174.8" text-anchor="middle">RPL7A</text><text x="1097.4" y="1159.0" text-anchor="middle">RPL8</text><text x="1128.9" y="1168.6000000000001" text-anchor="middle">RPL21</text><text x="1160.4" y="1177.9" text-anchor="middle">RPS3</text><text x="1410.6" y="1117.6000000000001" text-anchor="middle">HNRNPM</text><text x="1359.6" y="1147.6000000000001" text-anchor="middle">PCBP1</text><text x="1429" y="1147.5" text-anchor="middle">HNRNPU</text><text x="1342.1" y="1177.7" text-anchor="middle">HNRNPR</text><text x="1376.9" y="1177.7" text-anchor="middle">HNRNPH1</text><text x="1411.8" y="1177.7" text-anchor="middle">DDX3</text><text x="1446.6" y="1177.7" text-anchor="middle">HNRNPL</text></g></svg></body></html>
